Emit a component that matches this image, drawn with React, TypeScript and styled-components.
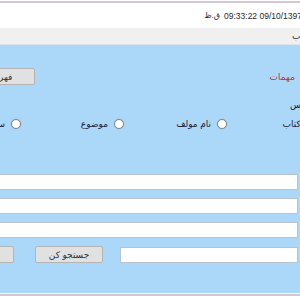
import React from 'react';
import styled, { createGlobalStyle } from 'styled-components';

const GlobalStyle = createGlobalStyle`
  body {
    margin: 0;
    background: #ffffff;
  }
`;

const FONT = `'Liberation Sans', 'DejaVu Sans', sans-serif`;

const App = () => {
  return (
    <Screen>
      <GlobalStyle />
      <Rule />
      <StatusBar>
        <Clock>
          <Meridiem dir='rtl'>ق.ظ</Meridiem>
          <span>09:33:22 09/10/1397</span>
        </Clock>
      </StatusBar>

      <MenuStrip>
        <MenuItem>کتاب</MenuItem>
      </MenuStrip>

      <Panel>
        <HeadRow>
          <Notice>مهمات</Notice>
          <Button $width={75}>فهرست</Button>
        </HeadRow>

        <Legend>
          <span>جستجو بر اساس</span>
        </Legend>

        <RadioRow>
          {['نام کتاب', 'نام مولف', 'موضوع', 'سال نشر'].map(label => (
            <RadioItem key={label}>
              <RadioCircle />
              <span>{label}</span>
            </RadioItem>
          ))}
        </RadioRow>

        <Fields>
          <TextBox />
          <TextBox />
          <TextBox />
          <SearchRow>
            <TextBox $width={178} />
            <Button $width={68}>جستجو کن</Button>
            <Button $width={64} $gap={4}>انصراف</Button>
          </SearchRow>
        </Fields>
      </Panel>

      <Rule $bottom />
    </Screen>
  );
};

const Screen = styled.div`
  width: 300px;
  height: 300px;
  overflow: hidden;
  direction: rtl;
  display: flex;
  flex-direction: column;
  padding-top: 1px;
  box-sizing: border-box;
  font-family: ${FONT};
  font-size: 9px;
  color: #222;
`;

const Rule = styled.div<{ $bottom?: boolean }>`
  height: 2px;
  flex-shrink: 0;
  background: #d6c7d6;
  margin-top: ${({ $bottom }) => ($bottom ? '1px' : '0')};
`;

const StatusBar = styled.div`
  height: 25px;
  flex-shrink: 0;
  display: flex;
  align-items: center;
  background: #ffffff;
`;

const Clock = styled.div`
  direction: ltr;
  display: flex;
  align-items: center;
  gap: 4px;
  flex-shrink: 0;
  white-space: nowrap;
  margin-right: -2px;
  font-size: 8.5px;
  color: #2a2a2a;
`;

const Meridiem = styled.span`
  unicode-bidi: isolate;
  font-size: 8px;
`;

const MenuStrip = styled.div`
  height: 16px;
  flex-shrink: 0;
  display: flex;
  align-items: center;
  justify-content: flex-end;
  padding-left: 292px;
  background: #f0f0f0;
  border-bottom: 1px solid #dde4ea;
`;

const MenuItem = styled.span`
  flex-shrink: 0;
  white-space: nowrap;
  color: #333;
`;

const Panel = styled.div`
  height: 248px;
  flex-shrink: 0;
  display: flex;
  flex-direction: column;
  padding-top: 23px;
  box-sizing: border-box;
  background: #abd7f8;
`;

const HeadRow = styled.div`
  display: flex;
  align-items: center;
  justify-content: space-between;
  padding-right: 5px;
  margin-left: -40px;
`;

const Notice = styled.span`
  color: #d42a2e;
`;

const Button = styled.div<{ $width: number; $gap?: number }>`
  width: ${({ $width }) => $width}px;
  height: 17px;
  flex-shrink: 0;
  display: flex;
  align-items: center;
  justify-content: center;
  box-sizing: border-box;
  margin-right: ${({ $gap }) => $gap ?? 0}px;
  background: #e1e1e1;
  border: 1px solid #b4b4b4;
  border-radius: 2px;
  color: #333;
  white-space: nowrap;
`;

const Legend = styled.div`
  display: flex;
  justify-content: flex-end;
  padding-left: 290px;
  margin-top: 15px;
  height: 10px;
  line-height: 10px;

  span {
    flex-shrink: 0;
    white-space: nowrap;
    color: #223;
  }
`;

const RadioRow = styled.div`
  display: flex;
  align-items: center;
  height: 12px;
  margin-top: 8px;
  margin-right: -30px;
`;

const RadioItem = styled.label`
  width: 103px;
  flex-shrink: 0;
  display: flex;
  align-items: center;
  gap: 6px;
  white-space: nowrap;
  color: #223;
`;

const RadioCircle = styled.span`
  width: 10px;
  height: 10px;
  flex-shrink: 0;
  box-sizing: border-box;
  border-radius: 50%;
  background: #ffffff;
  border: 1px solid #7d858d;
  box-shadow: 0 0 1px #9aa;
`;

const Fields = styled.div`
  display: flex;
  flex-direction: column;
  gap: 8px;
  margin-top: 44px;
  margin-right: 2px;
  margin-left: -10px;
`;

const TextBox = styled.div<{ $width?: number }>`
  height: 16px;
  flex-shrink: 0;
  box-sizing: border-box;
  width: ${({ $width }) => ($width ? `${$width}px` : 'auto')};
  background: #ffffff;
  border: 1px solid #b9c4cf;
`;

const SearchRow = styled.div`
  display: flex;
  align-items: center;
  gap: 17px;
`;

export default App;
